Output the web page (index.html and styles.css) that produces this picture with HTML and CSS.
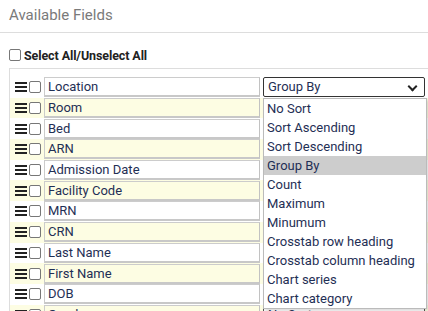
FILE: index.html
```html
<!DOCTYPE html>
<html lang="en">
<head>
  <meta charset="UTF-8" />
  <title>Available Fields</title>
  <link rel="stylesheet" href="styles.css">
</head>
<body>
  <div class="panel">
    <div class="panel-head">Available Fields</div>

    <label class="select-all">
      <span class="box"></span>
      Select All/Unselect All
    </label>

    <div class="field-list">
      <div class="row">
        <span class="handle"><i></i><i></i><i></i></span><span class="box"></span>
        <div class="name">Location</div>
        <div class="sort open">Group By
          <ul class="menu">
            <li>No Sort</li>
            <li>Sort Ascending</li>
            <li>Sort Descending</li>
            <li class="hover">Group By</li>
            <li>Count</li>
            <li>Maximum</li>
            <li>Minumum</li>
            <li>Crosstab row heading</li>
            <li>Crosstab column heading</li>
            <li>Chart series</li>
            <li>Chart category</li>
          </ul>
        </div>
      </div>
      <div class="row alt"><span class="handle"><i></i><i></i><i></i></span><span class="box"></span><div class="name">Room</div><div class="sort">No Sort</div></div>
      <div class="row"><span class="handle"><i></i><i></i><i></i></span><span class="box"></span><div class="name">Bed</div><div class="sort">No Sort</div></div>
      <div class="row alt"><span class="handle"><i></i><i></i><i></i></span><span class="box"></span><div class="name">ARN</div><div class="sort">No Sort</div></div>
      <div class="row"><span class="handle"><i></i><i></i><i></i></span><span class="box"></span><div class="name">Admission Date</div><div class="sort">No Sort</div></div>
      <div class="row alt"><span class="handle"><i></i><i></i><i></i></span><span class="box"></span><div class="name">Facility Code</div><div class="sort">No Sort</div></div>
      <div class="row"><span class="handle"><i></i><i></i><i></i></span><span class="box"></span><div class="name">MRN</div><div class="sort">No Sort</div></div>
      <div class="row alt"><span class="handle"><i></i><i></i><i></i></span><span class="box"></span><div class="name">CRN</div><div class="sort">No Sort</div></div>
      <div class="row"><span class="handle"><i></i><i></i><i></i></span><span class="box"></span><div class="name">Last Name</div><div class="sort">No Sort</div></div>
      <div class="row alt"><span class="handle"><i></i><i></i><i></i></span><span class="box"></span><div class="name">First Name</div><div class="sort">No Sort</div></div>
      <div class="row"><span class="handle"><i></i><i></i><i></i></span><span class="box"></span><div class="name">DOB</div><div class="sort">No Sort</div></div>
      <div class="row alt"><span class="handle"><i></i><i></i><i></i></span><span class="box"></span><div class="name">Gender</div><div class="sort">No Sort</div></div>
    </div>
  </div>
</body>
</html>
```

FILE: styles.css
```css
body {
  margin: 0;
  font-family: Roboto, "Liberation Sans", sans-serif;
  background: #fff;
  overflow: hidden;
  height: 311px;
}

.panel-head {
  padding: 6px 9px 0;
  height: 26px;
  font-size: 15px;
  color: #7a7a7a;
  border-bottom: 1px solid #ddd;
}

.select-all {
  display: flex;
  align-items: center;
  gap: 3px;
  margin: 14px 0 0 9px;
  font-size: 12.5px;
  font-weight: bold;
  letter-spacing: -0.1px;
  color: #222;
  height: 16px;
}

.box {
  width: 10px;
  height: 10px;
  border: 1px solid #777;
  border-radius: 2px;
  background: #fff;
  flex: none;
}

.field-list {
  margin: 5px 0 0 9px;
  padding-top: 8px;
  border-top: 1px solid #ddd;
  border-left: 1px solid #ddd;
}

.row {
  display: flex;
  align-items: center;
  height: 20.7px;
  padding-left: 5px;
}

.row.alt {
  background: #fdfde3;
}

.handle {
  display: flex;
  flex-direction: column;
  gap: 2px;
  width: 12px;
  margin-right: 2px;
  flex: none;
}

.handle i {
  display: block;
  height: 2px;
  background: #222;
}

.row .box {
  margin-right: 3px;
}

.name {
  box-sizing: border-box;
  width: 216px;
  height: 20px;
  padding: 0 3px;
  font-size: 13px;
  line-height: 18px;
  color: #1f2f55;
  border: 1px solid #ccc;
  border-right-color: #c2c2c2;
  border-bottom: 2px solid #c8c8c8;
  background: #fff;
  flex: none;
}

.row.alt .name {
  background: #fdfde3;
}

.sort {
  position: relative;
  box-sizing: border-box;
  width: 162px;
  height: 20px;
  margin-left: 3px;
  padding: 0 4px;
  font-size: 13px;
  line-height: 18px;
  color: #1f2f55;
  border: 1px solid #555;
  border-radius: 2px;
  background: #fff;
}

.sort.open {
  border-color: #333;
}

.sort.open::after {
  content: "";
  position: absolute;
  right: 8px;
  top: 5px;
  width: 5px;
  height: 5px;
  border-right: 2px solid #222;
  border-bottom: 2px solid #222;
  transform: rotate(45deg);
}

.menu {
  position: absolute;
  z-index: 2;
  left: -1px;
  top: 20px;
  width: 162px;
  margin: 0;
  padding: 0;
  list-style: none;
  background: #fff;
  border: 1px solid #bbb;
  box-shadow: 2px 2px 3px rgba(0, 0, 0, 0.15);
}

.menu li {
  height: 19px;
  line-height: 19px;
  padding: 0 3px;
  font-size: 13px;
  color: #1f2f55;
}

.menu li.hover {
  background: #cdcdcd;
}
```
